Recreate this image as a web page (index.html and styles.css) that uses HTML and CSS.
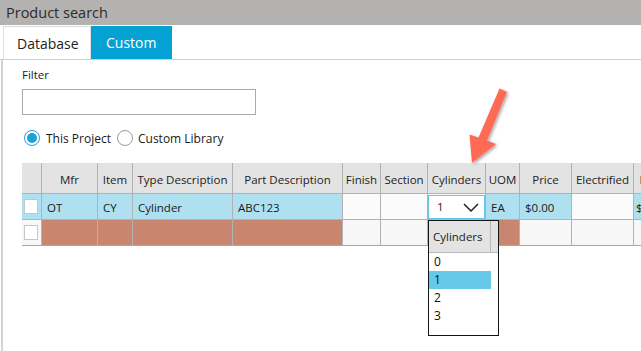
FILE: index.html
```html
<!DOCTYPE html>
<html>
<head>
<meta charset="utf-8">
<link rel="stylesheet" href="styles.css">
</head>
<body>
<div class="window">
  <div class="titlebar">Product search</div>
  <div class="tabs">
    <div class="tab">Database</div>
    <div class="tab active">Custom</div>
  </div>
  <div class="panel">
    <label class="filter-label">Filter</label>
    <input class="filter-input" type="text">
    <div class="radios">
      <span class="radio checked"></span><span class="radio-label">This Project</span>
      <span class="radio"></span><span class="radio-label">Custom Library</span>
    </div>
    <table class="grid">
      <colgroup>
        <col class="c-chk"><col class="c-mfr"><col class="c-item"><col class="c-type"><col class="c-part"><col class="c-finish"><col class="c-section"><col class="c-cyl"><col class="c-uom"><col class="c-price"><col class="c-elec"><col class="c-list">
      </colgroup>
      <thead>
        <tr>
          <th></th><th>Mfr</th><th>Item</th><th>Type Description</th><th>Part Description</th><th>Finish</th><th>Section</th><th>Cylinders</th><th>UOM</th><th>Price</th><th>Electrified</th><th>List Price</th>
        </tr>
      </thead>
      <tbody>
        <tr class="row-sel">
          <td class="chk"><span class="checkbox"></span></td>
          <td>OT</td><td>CY</td><td>Cylinder</td><td>ABC123</td>
          <td class="plain"></td><td class="plain"></td>
          <td class="cyl-cell"><div class="select"><span>1</span><svg class="chev" width="16" height="9" viewBox="0 0 16 9"><polyline points="1,1 8,8 15,1" fill="none" stroke="#222" stroke-width="1.5"/></svg></div></td>
          <td>EA</td><td>$0.00</td><td class="plain"></td><td class="last">$0.00</td>
        </tr>
        <tr class="row-new">
          <td class="chk plain"><span class="checkbox"></span></td>
          <td class="red"></td><td class="red"></td><td class="red"></td><td class="red"></td>
          <td class="plain"></td><td class="plain"></td>
          <td class="red dd-cell">
            <div class="dropdown">
              <div class="dd-head"><span class="dd-title">Cylinders</span><span class="dd-gut"></span></div>
              <div class="dd-item">0</div>
              <div class="dd-item selected">1</div>
              <div class="dd-item">2</div>
              <div class="dd-item">3</div>
            </div>
          </td>
          <td class="red"></td><td class="plain"></td><td class="plain"></td><td class="plain"></td>
        </tr>
      </tbody>
    </table>
  </div>
  <svg class="arrow" width="641" height="351" viewBox="0 0 641 351">
    <defs>
      <filter id="sh" x="-20%" y="-20%" width="140%" height="140%">
        <feDropShadow dx="1.5" dy="1.5" stdDeviation="1.5" flood-color="#000" flood-opacity="0.35"/>
      </filter>
    </defs>
    <polygon filter="url(#sh)" fill="#ff6a55" points="499.5,88.5 507,91.8 487,140.5 496,144 472,163 469.5,134.5 478.5,137.5"/>
  </svg>
</div>
</body>
</html>
```
FILE: styles.css
```css
html, body {
  margin: 0;
  padding: 0;
  background: #fff;
}
body {
  width: 641px;
  height: 351px;
  overflow: hidden;
  font-family: "Open Sans", "Noto Sans", sans-serif;
  color: #1a1a1a;
}
.window {
  position: relative;
  width: 641px;
  height: 351px;
}
.titlebar {
  height: 25px;
  line-height: 25px;
  background: #b3b2b0;
  color: #2b2b2b;
  font-size: 14.5px;
  padding-left: 6px;
}
.tabs {
  display: flex;
  margin-top: 1px;
  padding-left: 3px;
  height: 33px;
  border-bottom: 1px solid #cfcfcf;
}
.tab {
  box-sizing: border-box;
  width: 88px;
  height: 33px;
  line-height: 33px;
  border: 1px solid #dedede;
  border-bottom: none;
  font-size: 14px;
  color: #1e1e1e;
  padding-left: 13px;
}
.tab.active {
  width: 81px;
  border: none;
  background: #03a2d3;
  color: #fff;
  padding-left: 15px;
}
.panel {
  margin-left: 1px;
  border-left: 2px solid #d3d3d3;
  height: 291px;
  padding-left: 19px;
  display: flex;
  flex-direction: column;
  align-items: flex-start;
  font-size: 11.5px;
}
.filter-label {
  margin-top: 7px;
  height: 16px;
  line-height: 16px;
  color: #1a1a1a;
}
.filter-input {
  box-sizing: border-box;
  margin: 6px 0 0 0;
  width: 234px;
  height: 26px;
  border: 1px solid #aaaaaa;
  padding: 0;
  outline: none;
}
.radios {
  display: flex;
  align-items: center;
  margin-top: 14px;
  margin-left: 2px;
  height: 18px;
}
.radio {
  box-sizing: border-box;
  width: 16px;
  height: 16px;
  border-radius: 50%;
  border: 1px solid #9a9a9a;
  background: #fff;
  display: flex;
  align-items: center;
  justify-content: center;
}
.radio.checked {
  border-color: #1f9fd6;
}
.radio.checked::after {
  content: "";
  width: 10px;
  height: 10px;
  border-radius: 50%;
  background: #1d9fd8;
}
.radio-label {
  margin-left: 6px;
  margin-right: 6px;
  font-size: 12px;
  color: #1a1a1a;
}
.radio-label:last-child {
  margin-left: 5px;
}
.grid {
  margin-top: 16px;
  table-layout: fixed;
  border-collapse: separate;
  border-spacing: 0;
  width: 672px;
  flex: none;
  font-size: 11.5px;
}
.c-chk { width: 20px; }
.c-mfr { width: 56px; }
.c-item { width: 35px; }
.c-type { width: 100px; }
.c-part { width: 110px; }
.c-finish { width: 38px; }
.c-section { width: 47px; }
.c-cyl { width: 58px; }
.c-uom { width: 34px; }
.c-price { width: 52px; }
.c-elec { width: 62px; }
.c-list { width: 60px; }
.grid th, .grid td {
  border-right: 1px solid #b2b2b2;
  border-bottom: 1px solid #b2b2b2;
  padding: 0 0 0 5px;
  white-space: nowrap;
  overflow: hidden;
  text-align: left;
  font-weight: normal;
}
.grid th {
  background: #e3e3e3;
  text-align: center;
  padding: 2px 0 0 0;
  color: #222;
  box-sizing: border-box;
  height: 31px;
}
.row-sel td {
  height: 24px;
  background: #aee0f0;
  padding-top: 1px;
}
.row-new td {
  height: 25px;
}
.grid tbody tr:last-child td {
  border-bottom: 1px solid #a8a8a8;
}
.grid td.plain {
  background: #f7f7f7;
}
.row-sel td.plain {
  background: #fbfbfb;
}
.grid td.red {
  background: #c88671;
}
.grid td.chk {
  padding: 0 0 0 2px;
}
.row-sel td.chk {
  background: #aee0f0;
}
.checkbox {
  display: block;
  box-sizing: border-box;
  width: 14px;
  height: 15px;
  background: #fff;
  border: 1px solid #c6c6c6;
}
.grid td.last {
  padding-left: 2px;
}
.grid td.cyl-cell {
  padding: 0;
  background: #fbfbfb;
}
.select {
  box-sizing: border-box;
  width: 57px;
  height: 24px;
  border: 1px solid #66c6e8;
  background: #fff;
  display: flex;
  align-items: center;
  padding-left: 8px;
}
.select span {
  flex: 1;
}
.chev {
  margin-right: 5px;
  margin-top: 1px;
}
.grid td.dd-cell {
  padding: 0;
  position: relative;
  overflow: visible;
}
.dropdown {
  position: absolute;
  left: 0;
  top: 0;
  box-sizing: border-box;
  width: 71px;
  height: 116px;
  border: 1px solid #151515;
  background: #fff;
  z-index: 2;
}
.dd-head {
  display: flex;
  height: 31px;
  background: #e3e3e3;
  border-bottom: 1px solid #b8b8b8;
}
.dd-title {
  box-sizing: border-box;
  width: 62px;
  border-right: 1px solid #b8b8b8;
  padding-left: 4px;
  line-height: 31px;
  color: #222;
}
.dd-item {
  width: 62px;
  height: 18px;
  line-height: 18px;
  padding-left: 5px;
  box-sizing: border-box;
  color: #111;
  font-size: 12px;
}
.dd-item.selected {
  background: #66c9ea;
}
.arrow {
  position: absolute;
  left: 0;
  top: 0;
  pointer-events: none;
  z-index: 5;
}
```
